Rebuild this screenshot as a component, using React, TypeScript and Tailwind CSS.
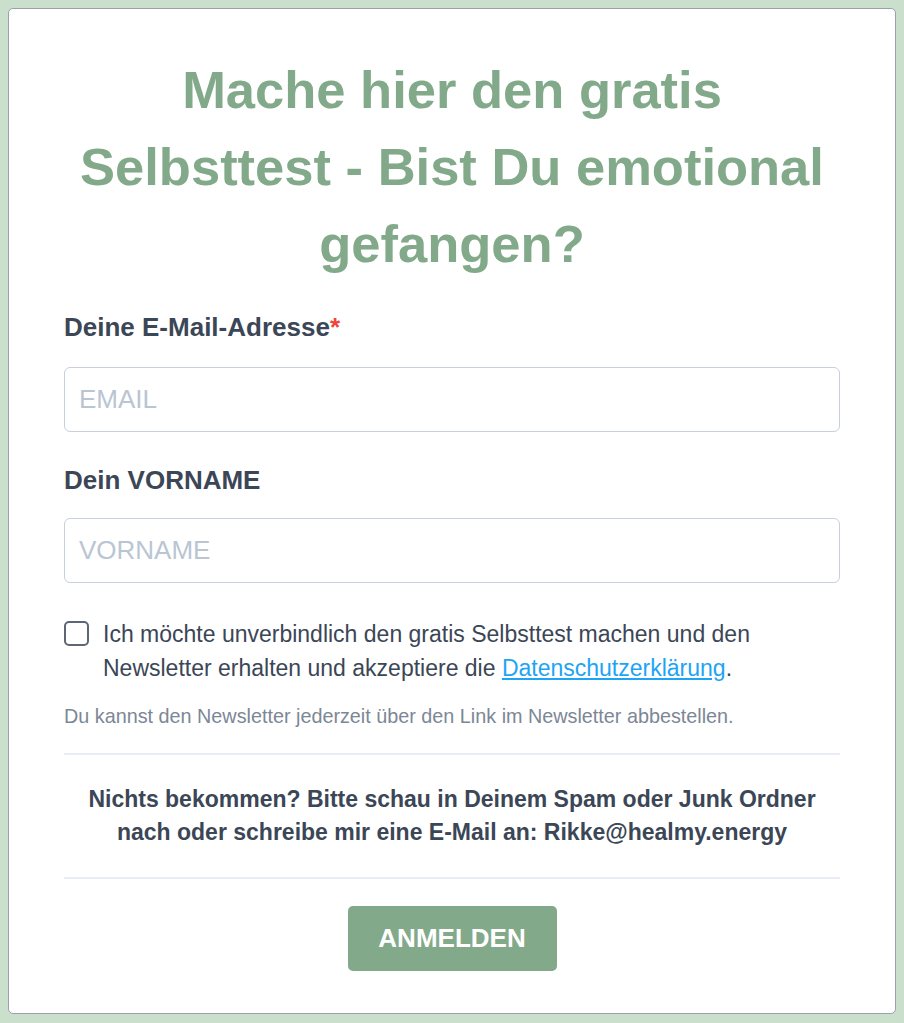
import React from "react";

export default function App() {
  return (
    <div className="min-h-[1023px] bg-[#cadfcc] p-2" style={{ fontFamily: '"Liberation Sans", Arial, sans-serif' }}>
      <div className="rounded-[5px] border border-[#9aa1ab] bg-white px-[55px] pt-[42px] pb-[42px]">
        <h1 className="text-center text-[52.5px] font-bold leading-[77px] text-[#82aa8a]">
          Mache hier den gratis
          <br />
          Selbsttest - Bist Du emotional
          <br />
          gefangen?
        </h1>

        <form className="mt-[30px]">
          <label className="block text-[26px] font-bold leading-[30px] text-[#3b4656]">
            Deine E-Mail-Adresse<span className="text-[#f0453a]">*</span>
          </label>
          <input
            type="email"
            placeholder="EMAIL"
            className="mt-[25px] block h-[65px] w-full rounded-[6px] border border-[#c7d0dc] px-[14px] text-[26px] text-[#3b4656] placeholder:text-[#bac5d3] outline-none"
          />

          <label className="mt-[33px] block text-[26px] font-bold leading-[30px] text-[#3b4656]">
            Dein VORNAME
          </label>
          <input
            type="text"
            placeholder="VORNAME"
            className="mt-[23px] block h-[65px] w-full rounded-[6px] border border-[#c7d0dc] px-[14px] text-[26px] text-[#3b4656] placeholder:text-[#bac5d3] outline-none"
          />

          <div className="mt-[34px] flex items-start gap-[14px]">
            <span className="mt-[4px] block h-[25px] w-[25px] shrink-0 rounded-[5px] border-2 border-[#5d6674] bg-white" />
            <p className="text-[23px] leading-[34px] text-[#3b4656]">
              Ich möchte unverbindlich den gratis Selbsttest machen und den Newsletter erhalten und akzeptiere die{" "}
              <a href="#" className="text-[#1ea4f4] underline">Datenschutzerklärung</a>.
            </p>
          </div>

          <p className="mt-[19px] text-[19.8px] leading-[24px] text-[#7c8796]">
            Du kannst den Newsletter jederzeit über den Link im Newsletter abbestellen.
          </p>

          <div className="mt-[25px] border-t-2 border-[#e6edf6]" />

          <p className="mt-[28px] text-center text-[23px] font-bold leading-[33px] text-[#3b4656]">
            Nichts bekommen? Bitte schau in Deinem Spam oder Junk Ordner
            <br />
            nach oder schreibe mir eine E-Mail an: Rikke@healmy.energy
          </p>

          <div className="mt-[28px] border-t-2 border-[#e6edf6]" />

          <div className="mt-[27px] flex justify-center">
            <button
              type="button"
              className="h-[65px] w-[209px] rounded-[5px] bg-[#82aa8a] text-[26px] font-bold text-white"
            >
              ANMELDEN
            </button>
          </div>
        </form>
      </div>
    </div>
  );
}
